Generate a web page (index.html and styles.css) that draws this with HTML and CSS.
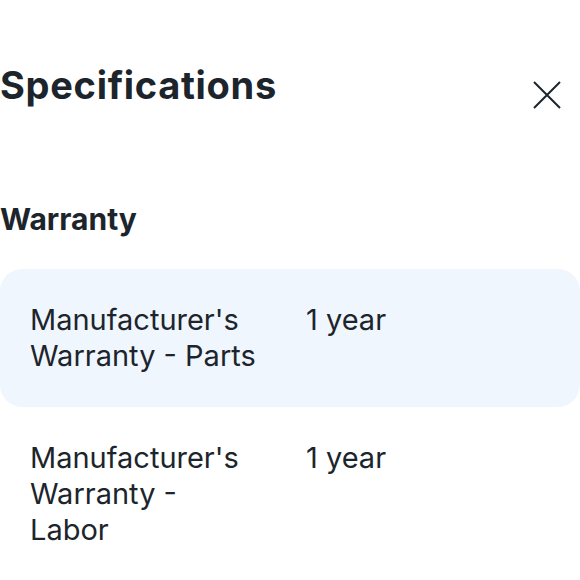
FILE: index.html
```html
<!DOCTYPE html>
<html lang="en">
<head>
<meta charset="utf-8">
<link rel="stylesheet" href="styles.css">
</head>
<body>
<div class="panel">
  <div class="header">
    <h1 class="title">Specifications</h1>
    <button class="close" aria-label="Close">
      <svg width="28" height="28" viewBox="0 0 28 28"><path d="M1 1 L27 27 M27 1 L1 27" stroke="#1d252c" stroke-width="2" fill="none"/></svg>
    </button>
  </div>
  <h2 class="section">Warranty</h2>
  <div class="rows">
    <div class="row shaded">
      <div class="label">Manufacturer's Warranty - Parts</div>
      <div class="value">1 year</div>
    </div>
    <div class="row">
      <div class="label">Manufacturer's Warranty - Labor</div>
      <div class="value">1 year</div>
    </div>
  </div>
</div>
</body>
</html>
```
FILE: styles.css
```css
html, body {
  margin: 0;
  padding: 0;
  background: #ffffff;
}
body {
  font-family: Inter, "Noto Sans", sans-serif;
  color: #1d252c;
}
.panel {
  width: 580px;
}
.header {
  display: flex;
  justify-content: space-between;
  align-items: center;
  padding-top: 60px;
  padding-right: 19px;
}
.title {
  margin: 0;
  font-size: 38px;
  font-weight: 700;
  letter-spacing: 0.7px;
  line-height: 50px;
}
.close {
  border: 0;
  background: none;
  padding: 0;
  width: 28px;
  height: 28px;
  margin-top: 20px;
  display: flex;
}
.section {
  margin: 91px 0 0 0;
  font-size: 30px;
  font-weight: 700;
  line-height: 36px;
}
.rows {
  margin-top: 32px;
}
.row {
  display: grid;
  grid-template-columns: 230px 1fr;
  column-gap: 46px;
  padding: 33px 30px;
  font-size: 29px;
  line-height: 36px;
  border-radius: 22px;
}
.shaded {
  background: #f0f6fe;
}
```
